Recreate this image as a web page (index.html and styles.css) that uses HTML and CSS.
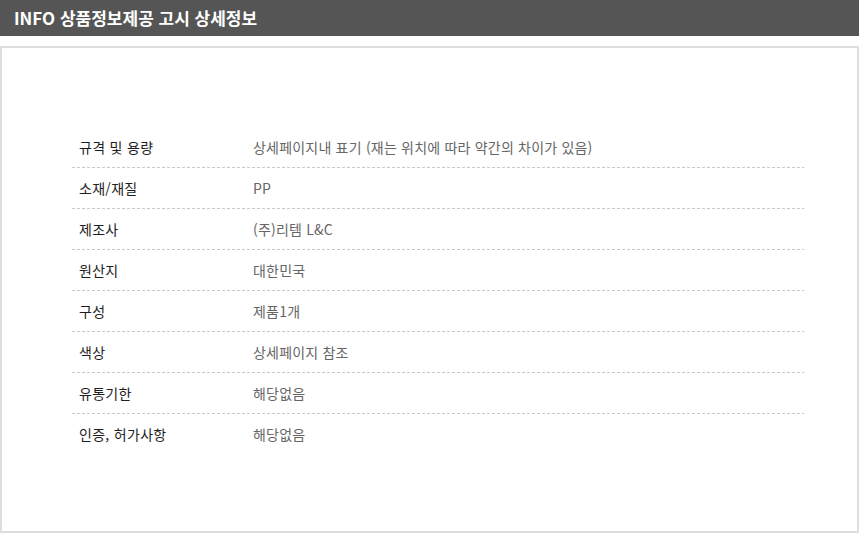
FILE: index.html
```html
<!DOCTYPE html>
<html lang="ko">
<head>
<meta charset="utf-8">
<link rel="stylesheet" href="styles.css">
</head>
<body>
<div class="header">INFO 상품정보제공 고시 상세정보</div>
<div class="box">
  <div class="table">
    <div class="row"><div class="label">규격 및 용량</div><div class="value">상세페이지내 표기 (재는 위치에 따라 약간의 차이가 있음)</div></div>
    <div class="row"><div class="label">소재/재질</div><div class="value">PP</div></div>
    <div class="row"><div class="label">제조사</div><div class="value">(주)리템 L&amp;C</div></div>
    <div class="row"><div class="label">원산지</div><div class="value">대한민국</div></div>
    <div class="row"><div class="label">구성</div><div class="value">제품1개</div></div>
    <div class="row"><div class="label">색상</div><div class="value">상세페이지 참조</div></div>
    <div class="row"><div class="label">유통기한</div><div class="value">해당없음</div></div>
    <div class="row"><div class="label">인증, 허가사항</div><div class="value">해당없음</div></div>
  </div>
</div>
</body>
</html>
```
FILE: styles.css
```css
html, body {
  margin: 0;
  padding: 0;
  background: #fff;
}
body {
  width: 859px;
  height: 558px;
  font-family: "Noto Sans CJK KR", "Noto Sans", sans-serif;
}
.header {
  height: 36px;
  background: #555555;
  color: #fff;
  font-size: 17px;
  font-weight: 700;
  line-height: 36px;
  padding-left: 14px;
  box-sizing: border-box;
}
.box {
  margin-top: 10px;
  width: 859px;
  height: 487px;
  box-sizing: border-box;
  border: 2px solid #dedede;
  padding: 79px 53px 0 70px;
}
.row {
  display: flex;
  height: 41px;
  line-height: 40px;
  box-sizing: border-box;
  padding-left: 7px;
  background-image: repeating-linear-gradient(to right, #c8c8c8 0 3px, transparent 3px 5px);
  background-size: 100% 1px;
  background-position: left bottom;
  background-repeat: no-repeat;
}
.row:last-child {
  background: none;
}
.label {
  width: 174px;
  font-size: 14px;
  letter-spacing: 0.3px;
  color: #1e1e1e;
}
.value {
  font-size: 14px;
  letter-spacing: 0.2px;
  color: #666;
}
```
